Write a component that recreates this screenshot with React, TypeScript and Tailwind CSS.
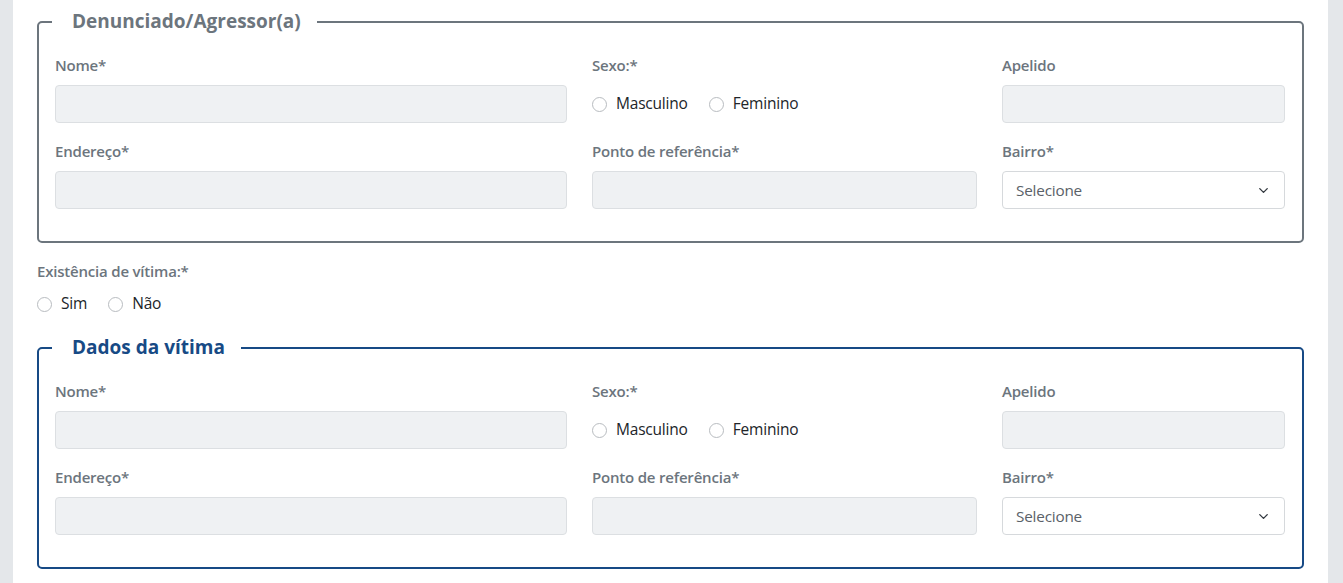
import React from 'react';
import { ChevronDown } from 'lucide-react';

const font = { fontFamily: '"Open Sans", "Noto Sans", sans-serif' };

const Label = ({ children }: { children: React.ReactNode }) => (
  <label className="block text-[15px] leading-6 font-semibold text-[#6c757d] mb-[8px] tracking-[-0.2px]">{children}</label>
);

const Input = () => (
  <div className="h-[38px] w-full rounded-[4px] border border-[#dcdfe2] bg-[#eff1f3]" />
);

const Radio = ({ label }: { label: string }) => (
  <span className="flex items-center gap-[9px]">
    <span className="w-[15px] h-[15px] rounded-full border border-[#b8bcc0] bg-white" />
    <span className="text-[15.5px] text-[#212529] tracking-[-0.2px]">{label}</span>
  </span>
);

const Select = () => (
  <div className="h-[38px] w-full rounded-[4px] border border-[#d6d9dc] bg-white flex items-center justify-between pl-[13px] pr-[13px]">
    <span className="text-[15.3px] text-[#5a6168] tracking-[-0.2px]">Selecione</span>
    <ChevronDown className="w-[15px] h-[15px] text-[#343a40]" strokeWidth={2.2} />
  </div>
);

const PersonFields = () => (
  <div className="grid grid-cols-[512px_385px_1fr] gap-x-[25px] gap-y-[16px]">
    <div>
      <Label>Nome*</Label>
      <Input />
    </div>
    <div>
      <Label>Sexo:*</Label>
      <div className="h-[38px] flex items-center gap-[21px]">
        <Radio label="Masculino" />
        <Radio label="Feminino" />
      </div>
    </div>
    <div>
      <Label>Apelido</Label>
      <Input />
    </div>
    <div>
      <Label>Endereço*</Label>
      <Input />
    </div>
    <div>
      <Label>Ponto de referência*</Label>
      <Input />
    </div>
    <div>
      <Label>Bairro*</Label>
      <Select />
    </div>
  </div>
);

export default function App() {
  return (
    <div className="min-h-screen bg-[#e4e7ea] pl-[13px] pr-[15px]" style={font}>
      <div className="bg-white min-h-screen px-[24px] pt-[8px] pb-[40px]">
        <fieldset className="border-2 border-[#6c757d] rounded-[5px] pl-[16px] pr-[17px] pt-[18px] pb-[32px]">
          <legend className="-ml-[3px] pl-[20px] pr-[16px] text-[19px] leading-[27px] font-bold text-[#6c757d]">
            Denunciado/Agressor(a)
          </legend>
          <PersonFields />
        </fieldset>

        <div className="mt-[16px]">
          <Label>Existência de vítima:*</Label>
          <div className="flex items-center gap-[21px] h-[26px]">
            <Radio label="Sim" />
            <Radio label="Não" />
          </div>
        </div>

        <fieldset className="mt-[17px] border-2 border-[#174a85] rounded-[5px] pl-[16px] pr-[17px] pt-[18px] pb-[32px]">
          <legend className="-ml-[3px] pl-[20px] pr-[16px] text-[19px] leading-[27px] font-bold text-[#174a85]">
            Dados da vítima
          </legend>
          <PersonFields />
        </fieldset>
      </div>
    </div>
  );
}
